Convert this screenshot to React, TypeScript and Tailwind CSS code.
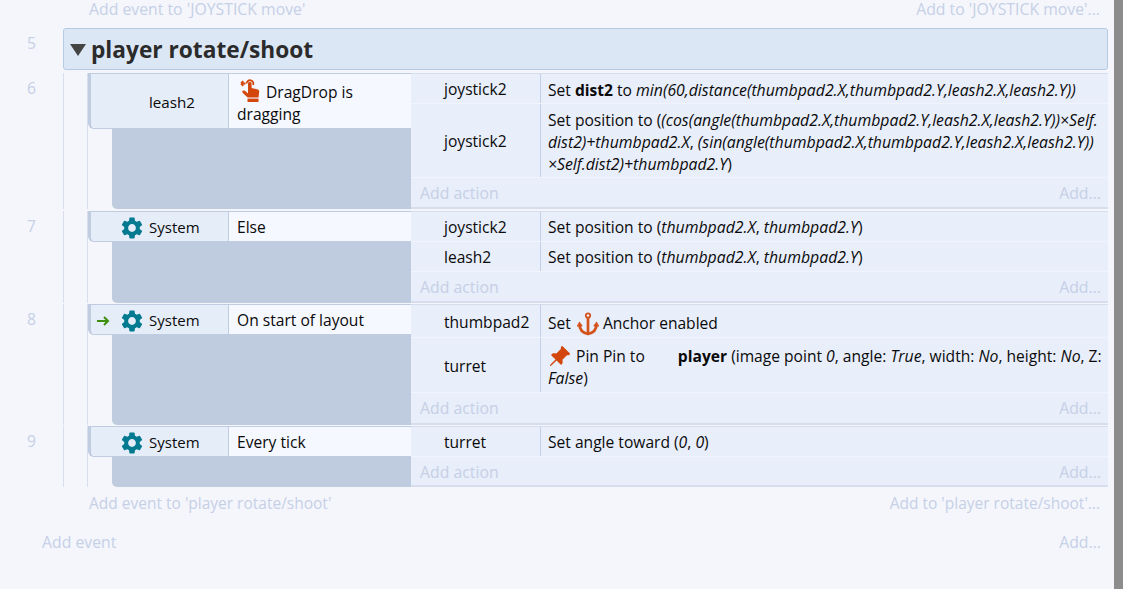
import type { ReactNode } from 'react';
import { MdSettings } from 'react-icons/md';
import { BsPinAngleFill } from 'react-icons/bs';

const font = { fontFamily: '"Open Sans", "Noto Sans", sans-serif' };

function Gear() {
    return <MdSettings className="h-[26px] w-[26px] text-[#047a91]" />;
}

function DragIcon() {
    return (
        <svg viewBox="0 0 20 24" className="-my-[6px] mr-[6px] ml-[3px] inline-block h-[24px] w-[20px] align-[2px]" fill="#d4470c">
            <path d="M8 10.500V5.500a1.800 1.800 0 0 1 3.600 0V10l5.400 1.200c1.500.3 2.300 1.300 2.200 2.700l-.7 5.600H7.700L2.800 15c-.9-1-.5-2.100.4-2.400 1-.3 2 .2 2.600 1l2.200 1.800z" />
            <rect x="7.500" y="20.600" width="11" height="3.400" />
            <path d="M5.500 5.500H1M1 5.500l2.300-2.300M1 5.500l2.300 2.300" stroke="#d4470c" strokeWidth="1.800" fill="none" />
            <path d="M6.600 5.500a3.400 3.400 0 1 1 6.500 1.500" stroke="#d4470c" strokeWidth="1.800" fill="none" />
        </svg>
    );
}

function AnchorIcon() {
    return (
        <svg viewBox="0 0 22 24" className="ml-[6px] mr-[4px] h-[24px] w-[22px]" fill="none" stroke="#d4521c" strokeWidth="2.700">
            <circle cx="11" cy="3.500" r="2.200" strokeWidth="1.800" />
            <path d="M11 6v16" />
            <path d="M2.500 12.500c0 6 4 8.500 8.500 9.500 4.500-1 8.500-3.500 8.500-9.500" />
            <path d="M0.500 14.500 2.500 11l2.500 3.200M21.500 14.500 19.500 11 17 14.200" strokeWidth="1.600" />
        </svg>
    );
}

function Action({ object, h, children }: { object: string; h: string; children: ReactNode }) {
    return (
        <div className={`flex items-stretch border-b border-[#f1f4fc] ${h}`}>
            <div className="flex w-[130px] items-center border-r border-[#c3cfe4] pl-[33px] pt-[3px]">{object}</div>
            <div className="flex-1 pl-[7px] whitespace-nowrap">{children}</div>
        </div>
    );
}

function AddAction({ h }: { h: string }) {
    return (
        <div className={`flex items-center justify-between border-b-2 border-[#d6deee] pl-[9px] pr-[7px] text-[15.800px] text-[#c6d0e6] ${h}`}>
            <span>Add action</span>
            <span>Add...</span>
        </div>
    );
}

interface EventProps {
    num: number;
    mt: string;
    h: string;
    object: ReactNode;
    condition: ReactNode;
    condH: string;
    actions: ReactNode;
}

function EventRow({ num, mt, h, object, condition, condH, actions }: EventProps) {
    return (
        <div className={`flex ${mt} ${h}`}>
            <div className="w-[64px] border-r border-[#d9deee] pr-[27px] pt-[4px] text-right text-[#c6d0e6]">{num}</div>
            <div className="w-[24px] border-r border-[#d9deee]" />
            <div className="flex w-[323px] flex-col">
                <div className={`flex rounded-bl-[6px] border-b border-l-[3px] border-t border-[#c0cce0] ${condH}`}>
                    <div className="flex w-[138px] items-center rounded-bl-[5px] border-r border-[#c0cce0] bg-[#e5edf9]">{object}</div>
                    <div className="flex-1 bg-[#f5f8ff] pl-[8px]">{condition}</div>
                </div>
                <div className="ml-[24px] flex-1 rounded-bl-[5px] bg-[#bfcbde]" />
            </div>
            <div className="flex w-[697px] flex-col border-t border-[#d6deee] bg-[#e8eefa]">{actions}</div>
        </div>
    );
}

function SystemCell({ arrow }: { arrow?: boolean }) {
    return (
        <div className="flex w-full items-center pt-[2px]">
            <div className="flex w-[28px] justify-start pl-[5px]">
                {arrow && (
                    <svg viewBox="0 0 14 12" className="h-[12px] w-[14px]" fill="none" stroke="#3d8f0d" strokeWidth="2">
                        <path d="M1 6h11M8 2l4 4-4 4" />
                    </svg>
                )}
            </div>
            <Gear />
            <span className="ml-[4px] text-[15px]">System</span>
        </div>
    );
}

export default function App() {
    return (
        <div className="flex h-[589px] w-full overflow-hidden bg-[#f4f6fc] text-[15.600px] text-[#0a0a0a]" style={font}>
            <div className="flex w-[1114px] flex-col">
                <div className="flex h-[28px] justify-between pl-[89px] pr-[14px] text-[15.800px] leading-[18px] text-[#c6d0e6]">
                    <span>Add event to 'JOYSTICK move'</span>
                    <span>Add to 'JOYSTICK move'...</span>
                </div>

                <div className="flex h-[42px]">
                    <div className="w-[63px] pr-[27px] pt-[4px] text-right text-[#c6d0e6]">5</div>
                    <div className="flex w-[1045px] items-center rounded-[3px] border border-[#b5cbe4] bg-[#dce7f5] pl-[6px]">
                        <div className="mt-[2px] h-0 w-0 border-x-[8px] border-t-[12px] border-x-transparent border-t-[#444]" />
                        <span className="ml-[5px] pt-[2px] text-[22.700px] font-bold text-[#2b2b2b]">player rotate/shoot</span>
                    </div>
                </div>

                <EventRow
                    num={6}
                    mt="mt-[3px]"
                    h="h-[136px]"
                    condH="h-[56px]"
                    object={<div className="w-full pl-[58px] pt-[2px] text-[15.200px]">leash2</div>}
                    condition={
                        <div className="pt-[7px] leading-[22px]">
                            <DragIcon />
                            DragDrop is
                            <br />
                            dragging
                        </div>
                    }
                    actions={
                        <>
                            <Action object="joystick2" h="h-[30px]">
                                <div className="leading-[32px]">
                                    Set <b>dist2</b> to <i className="text-[15.800px]">min(60,distance(thumbpad2.X,thumbpad2.Y,leash2.X,leash2.Y))</i>
                                </div>
                            </Action>
                            <Action object="joystick2" h="h-[74px]">
                                <div className="pt-[5px] leading-[22px]">
                                    Set position to (<i className="text-[15.800px]">(cos(angle(thumbpad2.X,thumbpad2.Y,leash2.X,leash2.Y))×Self.</i>
                                    <br />
                                    <i className="text-[15.800px]">dist2)+thumbpad2.X</i>, <i className="text-[15.800px]">(sin(angle(thumbpad2.X,thumbpad2.Y,leash2.X,leash2.Y))</i>
                                    <br />
                                    <i className="text-[15.800px]">×Self.dist2)+thumbpad2.Y</i>)
                                </div>
                            </Action>
                            <AddAction h="h-[31px] pt-[3px]" />
                        </>
                    }
                />

                <EventRow
                    num={7}
                    mt="mt-[2px]"
                    h="h-[92px]"
                    condH="h-[31px]"
                    object={<SystemCell />}
                    condition={<div className="leading-[31px]">Else</div>}
                    actions={
                        <>
                            <Action object="joystick2" h="h-[30px]">
                                <div className="leading-[31px]">Set position to (<i className="text-[15.800px]">thumbpad2.X</i>, <i className="text-[15.800px]">thumbpad2.Y</i>)</div>
                            </Action>
                            <Action object="leash2" h="h-[30px]">
                                <div className="leading-[31px]">Set position to (<i className="text-[15.800px]">thumbpad2.X</i>, <i className="text-[15.800px]">thumbpad2.Y</i>)</div>
                            </Action>
                            <AddAction h="h-[31px] pt-[3px]" />
                        </>
                    }
                />

                <EventRow
                    num={8}
                    mt="mt-[1px]"
                    h="h-[121px]"
                    condH="h-[31px]"
                    object={<SystemCell arrow />}
                    condition={<div className="leading-[31px]">On start of layout</div>}
                    actions={
                        <>
                            <Action object="thumbpad2" h="h-[33px]">
                                <div className="flex items-center pt-[2px] leading-[33px]">
                                    Set <AnchorIcon /> Anchor enabled
                                </div>
                            </Action>
                            <Action object="turret" h="h-[55px]">
                                <div className="pt-[7px] leading-[22px]">
                                    <BsPinAngleFill className="-my-[6px] mr-[5px] inline-block h-[23px] w-[23px] align-[0px] text-[#d4470c]" />
                                    Pin Pin to <span className="ml-[29px] font-bold">player</span> (image point <i className="text-[15.800px]">0</i>, angle: <i className="text-[15.800px]">True</i>, width: <i className="text-[15.800px]">No</i>, height: <i className="text-[15.800px]">No</i>, Z:
                                    <br />
                                    <i className="text-[15.800px]">False</i>)
                                </div>
                            </Action>
                            <AddAction h="h-[32px] pt-[1px]" />
                        </>
                    }
                />

                <EventRow
                    num={9}
                    mt="mt-[1px]"
                    h="h-[61px]"
                    condH="h-[31px]"
                    object={<SystemCell />}
                    condition={<div className="leading-[31px]">Every tick</div>}
                    actions={
                        <>
                            <Action object="turret" h="h-[30px]">
                                <div className="leading-[31px]">Set angle toward (<i className="text-[15.800px]">0</i>, <i className="text-[15.800px]">0</i>)</div>
                            </Action>
                            <AddAction h="h-[31px] pt-[3px]" />
                        </>
                    }
                />

                <div className="flex justify-between pl-[89px] pr-[14px] pt-[4px] text-[15.500px] leading-[24px] text-[#c6d0e6]">
                    <span>Add event to 'player rotate/shoot'</span>
                    <span>Add to 'player rotate/shoot'...</span>
                </div>
                <div className="flex justify-between pl-[42px] pr-[13px] pt-[16px] text-[15.800px] text-[#c6d0e6]">
                    <span>Add event</span>
                    <span>Add...</span>
                </div>
            </div>
            <div className="flex-1 bg-[#8c8c8c]" />
        </div>
    );
}
